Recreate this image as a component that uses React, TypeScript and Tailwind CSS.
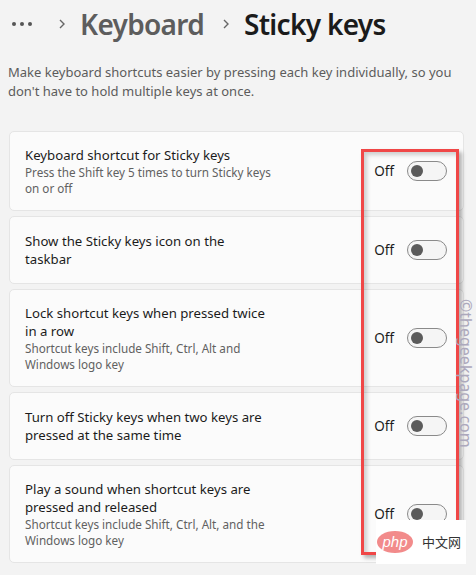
const FONT = "font-['Segoe_UI','Noto_Sans',sans-serif]";

type Setting = {
  title: string[];
  sub?: string[];
};

// line breaks follow the Settings window's wrapping
const SETTINGS: Setting[] = [
  { title: ['Keyboard shortcut for Sticky keys'], sub: ['Press the Shift key 5 times to turn Sticky keys', 'on or off'] },
  { title: ['Show the Sticky keys icon on the', 'taskbar'] },
  { title: ['Lock shortcut keys when pressed twice', 'in a row'], sub: ['Shortcut keys include Shift, Ctrl, Alt and', 'Windows logo key'] },
  { title: ['Turn off Sticky keys when two keys are', 'pressed at the same time'] },
  { title: ['Play a sound when shortcut keys are', 'pressed and released'], sub: ['Shortcut keys include Shift, Ctrl, Alt, and the', 'Windows logo key'] },
];

function Toggle() {
  return (
    <div className="flex items-center w-[40px] h-[20px] rounded-full border border-[#8a8a8a] bg-[#f5f5f5] pl-[3px]">
      <div className="w-[12px] h-[12px] rounded-full bg-[#5b5b5b]" />
    </div>
  );
}

function Chevron() {
  return (
    <svg width="8" height="12" viewBox="0 0 8 12" className="mx-[14px]">
      <path d="M2 2 L6 6 L2 10" fill="none" stroke="#666" strokeWidth="1.4" />
    </svg>
  );
}

export default function App() {
  return (
    <div className={`relative w-[476px] h-[575px] overflow-hidden bg-[#f3f3f3] ${FONT}`}>
      {/* Breadcrumb */}
      <header className="flex items-center h-[48px] pl-[12px]">
        <span className="flex gap-[4px] items-center">
          <span className="w-[4px] h-[4px] rounded-full bg-[#555]" />
          <span className="w-[4px] h-[4px] rounded-full bg-[#555]" />
          <span className="w-[4px] h-[4px] rounded-full bg-[#555]" />
        </span>
        <span className="ml-[12px]"><Chevron /></span>
        <h2 className="text-[28px] text-[#5d5d5d] font-semibold tracking-tight">Keyboard</h2>
        <span className="ml-[4px]"><Chevron /></span>
        <h1 className="text-[28px] text-[#1b1b1b] font-semibold tracking-tight">Sticky keys</h1>
      </header>

      <p className="mt-[15px] px-[8px] text-[13px] leading-[19px] text-[#5c5c5c]">
        Make keyboard shortcuts easier by pressing each key individually, so you don't have to hold multiple keys at once.
      </p>

      {/* Settings cards */}
      <div className="flex flex-col gap-[5px] mt-[30px] ml-[9px] w-[455px]">
        {SETTINGS.map(s => (
          <div key={s.title[0]} className="flex items-center justify-between min-h-[68px] bg-[#fbfbfb] border border-[#e5e5e5] rounded-[5px] pl-[15px] pr-[16px] py-[14px]">
            <div>
              {s.title.map(line => (
                <p key={line} className="text-[13.2px] leading-[18px] text-[#1b1b1b] whitespace-nowrap">{line}</p>
              ))}
              {s.sub?.map(line => (
                <p key={line} className="text-[11.7px] leading-[16px] text-[#616161] whitespace-nowrap">{line}</p>
              ))}
            </div>
            <div className="flex items-center gap-[13px]">
              <span className="text-[13.5px] text-[#1b1b1b]">Off</span>
              <Toggle />
            </div>
          </div>
        ))}
      </div>

      {/* Annotation frame */}
      <div className="absolute left-[361px] top-[149px] w-[98px] h-[406px] border-[3px] border-[#f04747] shadow-[3px_3px_4px_rgba(0,0,0,0.3),inset_3px_3px_4px_rgba(0,0,0,0.18)]" />

      {/* Watermark */}
      <div className="absolute left-[474px] top-[299px] origin-top-left rotate-90 text-[16px] leading-none text-[#aca8bc] whitespace-nowrap">
        ©thegeekpage.com
      </div>

      {/* php logo */}
      <div className="absolute left-[376px] top-[520px] w-[90px] h-[44px] bg-white flex items-center pl-[1px] gap-[9px]">
        <div className="w-[36px] h-[22px] rounded-[50%] bg-[#f28b8b] flex items-center justify-center">
          <span className="text-white italic text-[15px] leading-none font-['Liberation_Sans',sans-serif] -mt-[2px]">php</span>
        </div>
        <span className="text-[13px] text-[#333] font-['Noto_Sans_CJK_SC',sans-serif]">中文网</span>
      </div>
    </div>
  );
}
